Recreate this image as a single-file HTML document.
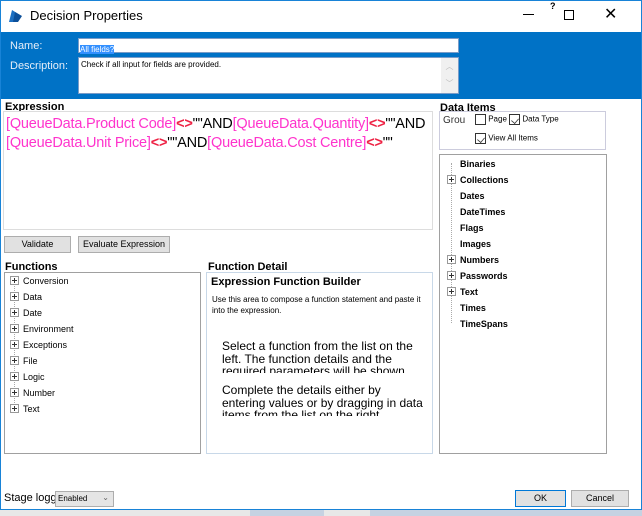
<!DOCTYPE html>
<html><head><style>
*{box-sizing:border-box;margin:0;padding:0}
body{width:642px;height:516px;overflow:hidden;background:#fff;font-family:"Liberation Sans",sans-serif;position:relative}
.a{position:absolute}
.win{left:0;top:0;width:642px;height:510px;border:1px solid #1883d7;background:#fff}
.box{position:absolute;border:1px solid #a0a0a0;background:#fff}
.lbl{position:absolute;font-weight:bold;font-size:11px;color:#000}
.btn{position:absolute;background:#e1e1e1;border:1px solid #adadad;font-size:9px;text-align:center;line-height:15px;color:#000}
.tr{position:absolute;font-size:9px;color:#000;height:16px;line-height:16px;white-space:nowrap}
.pl{display:inline-block;width:9px;height:9px;border:1px solid #999;vertical-align:-1px;margin-right:4px;position:relative;background:#fff}
.pl:before{content:"";position:absolute;left:1px;top:3px;width:5px;height:1px;background:#333}
.pl:after{content:"";position:absolute;left:3px;top:1px;width:1px;height:5px;background:#333}
.m{color:#ff33cc}.r{color:#ee2244;font-weight:bold}
.cb{display:inline-block;width:11px;height:11px;border:1px solid #333;vertical-align:middle;background:#fff;position:relative}
.ck:after{content:"";position:absolute;left:2px;top:1px;width:5px;height:7px;border:solid #333;border-width:0 1px 1px 0;transform:rotate(40deg) scale(.8)}
</style></head><body>
<div class="a win"></div>
<svg class="a" style="left:8px;top:8px" width="16" height="16"><path d="M4 2 L12 7 L8 14 L1 14 Z" fill="#1b6fc2"/><path d="M7 4 L14 8 L10 14 L5 14Z" fill="#0b4f9a"/></svg>
<div class="a" style="left:30px;top:8px;font-size:13px">Decision Properties</div>
<div class="a" style="left:523px;top:14px;width:11px;height:1px;background:#000"></div>
<div class="a" style="left:550px;top:1px;font-size:9px;font-weight:bold">?</div>
<div class="a" style="left:564px;top:10px;width:10px;height:10px;border:1px solid #000"></div>
<div class="a" style="left:604px;top:4px;font-size:16px;font-weight:100">✕</div>
<div class="a" style="left:1px;top:32px;width:640px;height:67px;background:#0072c6"></div>
<div class="a" style="left:10px;top:40px;font-size:11px;color:#e6eef8">Name:</div>
<div class="a" style="left:10px;top:60px;font-size:11px;color:#e6eef8">Description:</div>
<div class="a" style="left:78px;top:38px;width:381px;height:15px;background:#fff;border:1px solid #7a9cc8"><span style="background:#3390ff;color:#fff;font-size:8px;margin-left:1px;line-height:12px">All fields?</span></div>
<div class="a" style="left:78px;top:57px;width:381px;height:37px;background:#fff;border:1px solid #7a9cc8;font-size:8px;padding:2px 2px">Check if all input for fields are provided.</div>
<div class="a" style="left:441px;top:58px;width:17px;height:35px;background:#f0f0f0;color:#bbb;font-size:8px;text-align:center;line-height:17px">︿<br>﹀</div>
<div class="lbl" style="left:5px;top:101px">Expression</div>
<div class="box" style="left:3px;top:111px;width:430px;height:119px;border-color:#ddd;font-size:14.5px;padding:3px 2px;line-height:19px;letter-spacing:-.2px;white-space:nowrap">
<span class="m">[QueueData.Product Code]</span><span class="r">&lt;&gt;</span>""AND<span class="m">[QueueData.Quantity]</span><span class="r">&lt;&gt;</span>""AND<br><span class="m">[QueueData.Unit Price]</span><span class="r">&lt;&gt;</span>""AND<span class="m">[QueueData.Cost Centre]</span><span class="r">&lt;&gt;</span>""</div>
<div class="btn" style="left:4px;top:236px;width:67px;height:17px">Validate</div>
<div class="btn" style="left:78px;top:236px;width:92px;height:17px">Evaluate Expression</div>
<div class="lbl" style="left:5px;top:261px">Functions</div>
<div class="box" style="left:4px;top:272px;width:197px;height:182px"></div>
<div class="a" style="left:14px;top:278px;height:135px;border-left:1px dotted #aaa"></div>
<div class="tr" style="left:10px;top:273px"><span class="pl"></span>Conversion</div>
<div class="tr" style="left:10px;top:289px"><span class="pl"></span>Data</div>
<div class="tr" style="left:10px;top:305px"><span class="pl"></span>Date</div>
<div class="tr" style="left:10px;top:321px"><span class="pl"></span>Environment</div>
<div class="tr" style="left:10px;top:337px"><span class="pl"></span>Exceptions</div>
<div class="tr" style="left:10px;top:353px"><span class="pl"></span>File</div>
<div class="tr" style="left:10px;top:369px"><span class="pl"></span>Logic</div>
<div class="tr" style="left:10px;top:385px"><span class="pl"></span>Number</div>
<div class="tr" style="left:10px;top:401px"><span class="pl"></span>Text</div>
<div class="lbl" style="left:208px;top:261px">Function Detail</div>
<div class="box" style="left:206px;top:272px;width:227px;height:182px;border-color:#c8d8e8"></div>
<div class="a" style="left:211px;top:276px;font-size:11px;font-weight:bold">Expression Function Builder</div>
<div class="a" style="left:212px;top:294px;font-size:8px;line-height:11px;width:218px">Use this area to compose a function statement and paste it into the expression.</div>
<div class="a" style="left:222px;top:340px;font-size:12px;line-height:12.5px;width:200px;height:33px;overflow:hidden">Select a function from the list on the left. The function details and the required parameters will be shown here.</div>
<div class="a" style="left:222px;top:384px;font-size:12px;line-height:12.5px;width:205px;height:32px;overflow:hidden">Complete the details either by entering values or by dragging in data items from the list on the right.</div>
<div class="lbl" style="left:440px;top:102px">Data Items</div>
<div class="box" style="left:439px;top:111px;width:167px;height:39px;border-color:#ccd"></div>
<div class="a" style="left:443px;top:115px;font-size:10px;color:#333">Grou</div>
<div class="a" style="left:475px;top:114px;font-size:8px"><span class="cb"></span> Page <span class="cb ck"></span> Data Type</div>
<div class="a" style="left:475px;top:133px;font-size:8px"><span class="cb ck"></span> View All Items</div>
<div class="box" style="left:439px;top:154px;width:168px;height:300px"></div>
<div class="a" style="left:451px;top:163px;height:160px;border-left:1px dotted #aaa"></div>
<div class="tr" style="left:460px;top:156px;font-weight:bold">Binaries</div>
<div class="tr" style="left:447px;top:172px;font-weight:bold"><span class="pl"></span>Collections</div>
<div class="tr" style="left:460px;top:188px;font-weight:bold">Dates</div>
<div class="tr" style="left:460px;top:204px;font-weight:bold">DateTimes</div>
<div class="tr" style="left:460px;top:220px;font-weight:bold">Flags</div>
<div class="tr" style="left:460px;top:236px;font-weight:bold">Images</div>
<div class="tr" style="left:447px;top:252px;font-weight:bold"><span class="pl"></span>Numbers</div>
<div class="tr" style="left:447px;top:268px;font-weight:bold"><span class="pl"></span>Passwords</div>
<div class="tr" style="left:447px;top:284px;font-weight:bold"><span class="pl"></span>Text</div>
<div class="tr" style="left:460px;top:300px;font-weight:bold">Times</div>
<div class="tr" style="left:460px;top:316px;font-weight:bold">TimeSpans</div>
<div class="a" style="left:4px;top:492px;font-size:11px;width:51px;overflow:hidden;white-space:nowrap">Stage logging</div>
<div class="a" style="left:55px;top:491px;width:59px;height:16px;background:#e5e5e5;border:1px solid #adadad;font-size:8px;padding:2px 2px">Enabled<span style="position:absolute;right:4px;top:1px;color:#666">⌄</span></div>
<div class="btn" style="left:515px;top:490px;width:51px;height:17px;border:1px solid #0078d7">OK</div>
<div class="btn" style="left:571px;top:490px;width:58px;height:17px">Cancel</div>
<div class="a" style="left:0;top:510px;width:642px;height:6px;background:#e8e8e8"></div>
<div class="a" style="left:250px;top:510px;width:74px;height:6px;background:#c6d2e2"></div>
<div class="a" style="left:370px;top:510px;width:272px;height:6px;background:#c6d2e2"></div>
</body></html>
